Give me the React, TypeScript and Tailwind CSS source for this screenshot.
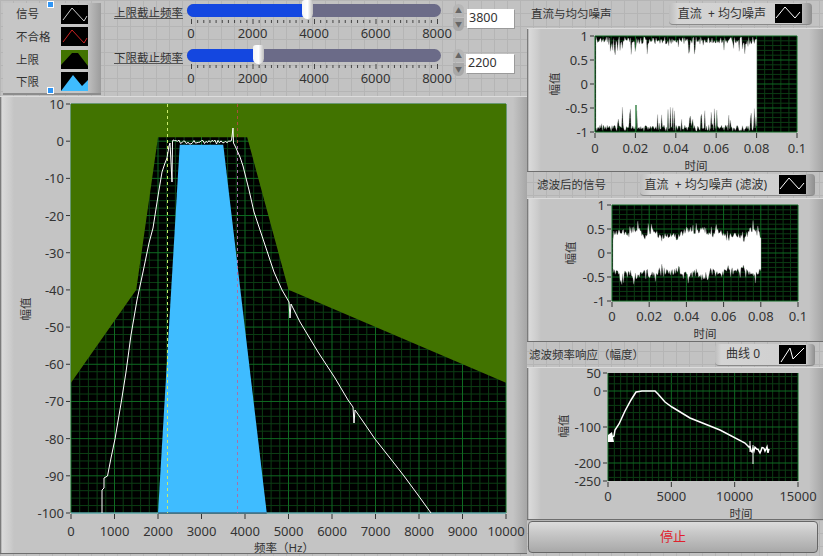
const font = "font-['Noto_Sans','Noto_Sans_CJK_SC',sans-serif]"

const rng = (seed: number) => {
  let s = seed
  return () => {
    s = (s * 16807) % 2147483647
    return s / 2147483647
  }
}

interface PlotBox {
  x0: number
  x1: number
  y0: number
  y1: number
}

const Grid = ({ box, xMajor, yMajor, xMinor = 5, yMinor = 5 }: { box: PlotBox; xMajor: number[]; yMajor: number[]; xMinor?: number; yMinor?: number }) => {
  const minors: string[] = []
  for (let i = 0; i < xMajor.length - 1; i++) {
    for (let j = 1; j < xMinor; j++) {
      const x = xMajor[i] + ((xMajor[i + 1] - xMajor[i]) * j) / xMinor
      minors.push(`M${x} ${box.y0}V${box.y1}`)
    }
  }
  for (let i = 0; i < yMajor.length - 1; i++) {
    for (let j = 1; j < yMinor; j++) {
      const y = yMajor[i] + ((yMajor[i + 1] - yMajor[i]) * j) / yMinor
      minors.push(`M${box.x0} ${y}H${box.x1}`)
    }
  }
  return (
    <g>
      <rect x={box.x0} y={box.y0} width={box.x1 - box.x0} height={box.y1 - box.y0} fill="#000" />
      <path d={minors.join("")} stroke="#0c3d14" strokeWidth="1" fill="none" />
      <path
        d={xMajor.map((x) => `M${x} ${box.y0}V${box.y1}`).join("") + yMajor.map((y) => `M${box.x0} ${y}H${box.x1}`).join("")}
        stroke="#0f6a22"
        strokeWidth="1"
        fill="none"
      />
    </g>
  )
}

const Axes = ({
  box,
  xTicks,
  yTicks,
  xLabelY,
  size = 13,
}: {
  box: PlotBox
  xTicks: [number, string][]
  yTicks: [number, string][]
  xLabelY: number
  size?: number
}) => (
  <g fill="#333" fontSize={size}>
    {xTicks.map(([x, t]) => (
      <g key={t}>
        <path d={`M${x} ${box.y1 + 1}v5`} stroke="#333" />
        <text x={x} y={xLabelY} textAnchor="middle">
          {t}
        </text>
      </g>
    ))}
    {yTicks.map(([y, t]) => (
      <g key={t}>
        <path d={`M${box.x0 - 5} ${y}h4`} stroke="#333" />
        <text x={box.x0 - 7} y={y + 5} textAnchor="end">
          {t}
        </text>
      </g>
    ))}
  </g>
)

const AxisText = ({ x, y, text, rotate = false }: { x: number; y: number; text: string; rotate?: boolean }) => (
  <text x={x} y={y} fontSize="11.5" fill="#333" textAnchor="middle" transform={rotate ? `rotate(-90 ${x} ${y})` : undefined}>
    {text}
  </text>
)

const Panel = ({ x, y, w, h, children }: { x: number; y: number; w: number; h: number; children: React.ReactNode }) => (
  <div
    className="shrink-0 border-y border-t-[#dcdcdc] border-b-[#6e6e6e] bg-[linear-gradient(90deg,#5c5c5c_0px,#dadada_2px,#cdcdcd_10px,#c4c4c4_14px,#c4c4c4_calc(100%-14px),#a6a6a6_100%)]"
    style={{ height: h }}
  >
    <svg width={w} height={h - 2} viewBox={`${x} ${y + 1} ${w} ${h - 2}`} className="block overflow-visible">
      {children}
    </svg>
  </div>
)

const LineIcon = ({ color = "#fff", d = "M2 14L12 3L23 15" }: { color?: string; d?: string }) => (
  <svg width="27" height="19" viewBox="0 0 27 19" className="block shrink-0">
    <rect width="27" height="19" fill="#000" />
    <path d={d} stroke={color} fill="none" strokeWidth="1" />
  </svg>
)

const LegendButton = ({ label, width, pad, gap, curve }: { label: string; width: number; pad: number; gap: number; curve?: boolean }) => (
  <div
    className="flex h-[22px] items-center justify-end rounded-sm border-b border-[#8a8a8a] bg-[linear-gradient(90deg,#bdbdbd,#d4d4d4_6%,#cfcfcf_90%,#8e8e8e)] text-[12px] text-[#333]"
    style={{ width, paddingRight: pad, gap }}
  >
    <span className="whitespace-pre">{label}</span>
    <LineIcon d={curve ? "M2 17L11 3L14 14L25 3" : "M1 14L10 3L20 14L25 8"} />
  </div>
)

const SectionHead = ({ label, button, h, left, right }: { label: string; button: React.ReactNode; h: number; left: number; right: number }) => (
  <div className="flex shrink-0 items-center justify-between" style={{ height: h, paddingLeft: left, paddingRight: right }}>
    <span className="whitespace-nowrap text-[11.5px] text-[#333]">{label}</span>
    {button}
  </div>
)

const hz = (f: number) => 71 + (f / 10000) * 435
const db = (v: number) => 141 - v * 3.72

const upperLimit = [
  [0, -65],
  [1500, -40],
  [2000, 1],
  [4050, 1],
  [5000, -40],
  [10000, -65],
]
  .map(([f, v]) => `${hz(f)},${db(v)}`)
  .join(" ")

const lowerLimit = [
  [2000, -100],
  [2500, -1],
  [3500, -1],
  [4500, -100],
]
  .map(([f, v]) => `${hz(f)},${db(v)}`)
  .join(" ")

const flatTop = () => {
  const r = rng(77)
  const pts: string[] = []
  for (let x = 173; x < 233; x += 1.5) {
    pts.push(`${x},${142 + (r() - 0.5) * 4}`)
  }
  return pts.join(" ")
}

const signal =
  "102,513 102,490 104,488 104,478 107.5,476 111,458 115,439 121.6,400 126,372 131,335 137,300 143,272 149,243 153,228 158,196 162,172 165,163 167,158 169,146 170,143 172,182 172.5,142 " +
  flatTop() +
  " 233,128 233.5,143 236,148 240,157 243,166 246,178 249,190 254,212 260,230 267,251 274,272 282,290 289,302 290,318 291,304 300,322 318,352 335,378 348,400 353,407 354,423 355,410 362,420 375,439 390,458 404,476 418,495 431,513"

const noise1 = () => {
  const r = rng(11)
  const up: string[] = []
  const down: string[] = []
  for (let x = 596; x <= 757; x += 0.8) {
    const a = r()
    const b = r()
    up.push(`${x},${37 + (a > 0.8 ? (a - 0.8) * 90 : a * 9)}`)
    down.unshift(`${x},${131 - (b > 0.75 ? (b - 0.75) * 96 : b * 8)}`)
  }
  return up.concat(down).join(" ")
}

const noise2 = () => {
  const r = rng(29)
  const up: string[] = []
  const down: string[] = []
  for (let x = 613; x <= 761; x += 0.8) {
    const env = 9 + 6 * Math.abs(Math.sin(x * 0.19)) + 5 * Math.abs(Math.sin(x * 0.047))
    const a = r()
    const b = r()
    up.push(`${x},${253 - env - a * 8 - (a > 0.9 ? (a - 0.9) * 60 : 0)}`)
    down.unshift(`${x},${253 + env + b * 8 + (b > 0.9 ? (b - 0.9) * 60 : 0)}`)
  }
  return up.concat(down).join(" ")
}

const ticks = (x0: number, x1: number, labels: string[]): [number, string][] =>
  labels.map((t, i) => [x0 + ((x1 - x0) * i) / (labels.length - 1), t])

const evenly = (a: number, b: number, n: number) => Array.from({ length: n + 1 }, (_, i) => a + ((b - a) * i) / n)

const MainChart = () => {
  const box = { x0: 71, x1: 506, y0: 104, y1: 513 }
  return (
    <Panel x={0} y={96} w={527} h={458}>
      <Grid box={box} xMajor={evenly(71, 506, 10)} yMajor={evenly(104, 513, 11)} />
      <polygon points={`71,104 ${upperLimit} 506,104`} fill="#417300" />
      <polygon points={lowerLimit} fill="#3fbcff" />
      <path d="M71 513H506" stroke="#7fc4e8" />
      <path d={`M${hz(2000)} 513H${hz(4500)}`} stroke="#1d3f5a" />
      <path d="M167.5 104V513" stroke="#c9ea6a" strokeDasharray="3 3" />
      <path d="M237.5 104V146" stroke="#a8503c" strokeDasharray="3 3" />
      <path d="M237.5 146V513" stroke="#a870a8" strokeDasharray="3 3" />
      <polyline points={signal} fill="none" stroke="#fff" strokeWidth="1" />
      <Axes
        box={box}
        xTicks={ticks(71, 506, ["0", "1000", "2000", "3000", "4000", "5000", "6000", "7000", "8000", "9000", "10000"])}
        yTicks={evenly(104, 513, 11).map((y, i) => [y, String(10 - i * 10)] as [number, string])}
        xLabelY={536}
      />
      <AxisText x={284} y={552} text="频率（Hz）" />
      <AxisText x={30} y={309} text="幅值" rotate />
    </Panel>
  )
}

const NoiseChart = () => {
  const box = { x0: 595, x1: 797, y0: 36, y1: 132 }
  return (
    <Panel x={527} y={28} w={296} h={144}>
      <Grid box={box} xMajor={evenly(595, 797, 5)} yMajor={evenly(36, 132, 4)} />
      <polygon points={noise1()} fill="#fff" stroke="#9a9a9a" strokeWidth="0.3" />
      <path d="M636 105V131" stroke="#0f6a22" strokeWidth="1.2" />
      <Axes
        box={box}
        xTicks={ticks(595, 797, ["0", "0.02", "0.04", "0.06", "0.08", "0.1"])}
        yTicks={ticks(36, 132, ["1", "0.5", "0", "-0.5", "-1"])}
        xLabelY={153}
      />
      <AxisText x={696} y={170} text="时间" />
      <AxisText x={559} y={84} text="幅值" rotate />
    </Panel>
  )
}

const FilteredChart = () => {
  const box = { x0: 612, x1: 798, y0: 205, y1: 301 }
  return (
    <Panel x={527} y={198} w={296} h={144}>
      <Grid box={box} xMajor={evenly(612, 798, 5)} yMajor={evenly(205, 301, 4)} />
      <polygon points={noise2()} fill="#fff" stroke="#9a9a9a" strokeWidth="0.3" />
      <Axes
        box={box}
        xTicks={ticks(612, 798, ["0", "0.02", "0.04", "0.06", "0.08", "0.1"])}
        yTicks={ticks(205, 301, ["1", "0.5", "0", "-0.5", "-1"])}
        xLabelY={321}
      />
      <AxisText x={705} y={338} text="时间" />
      <AxisText x={575} y={253} text="幅值" rotate />
    </Panel>
  )
}

const responseTail = () => {
  const r = rng(5)
  const pts: string[] = []
  for (let x = 750; x < 770; x += 1) pts.push(`${x},${450 + (r() - 0.5) * 7}`)
  return pts.join(" ")
}

const ResponseChart = () => {
  const box = { x0: 608, x1: 798, y0: 373, y1: 481 }
  return (
    <Panel x={527} y={367} w={296} h={153}>
      <Grid box={box} xMajor={evenly(608, 798, 3)} yMajor={[391, 427, 463]} xMinor={10} />
      <path d="M608 376.6H798M608 383.8H798M608 470.2H798M608 477.4H798" stroke="#0c3d14" />
      <polygon points="608,435 612,432 614,442 608,442" fill="#fff" />
      <polyline
        points={`609,440 612,437 614,436 615,430 619,424 625,411 631,400 636,392 642,391 655,391 658,394 665,402 672,407 690,418 720,430 745,443 749,447 ${responseTail()}`}
        fill="none"
        stroke="#fff"
        strokeWidth="1.5"
      />
      <path d="M753 445V464M750 441V452" stroke="#fff" />
      <Axes
        box={box}
        xTicks={ticks(608, 798, ["0", "5000", "10000", "15000"])}
        yTicks={[
          [373, "50"],
          [391, "0"],
          [427, "-100"],
          [463, "-200"],
          [481, "-250"],
        ]}
        xLabelY={501}
      />
      <AxisText x={741} y={518} text="时间" />
      <AxisText x={568} y={426} text="幅值" rotate />
    </Panel>
  )
}

const Slider = ({ label, value, boxLeft }: { label: string; value: number; boxLeft: number }) => {
  const pos = 4 + (value / 8000) * 246
  const tickMarks = Array.from({ length: 41 }, (_, i) => i)
  return (
    <div className="flex items-start">
      <span className="mt-[2px] w-[73px] whitespace-nowrap text-[11.5px] leading-[14px] text-[#333] underline decoration-[#555]">{label}</span>
      <div className="w-[254px]">
        <div className="relative h-[13px] rounded-full bg-[#6b6b88]">
          <div className="h-full rounded-l-full bg-[#1447e0]" style={{ width: pos }} />
          <div
            className="absolute top-[-4px] h-[19px] w-[11px] rounded-t-[3px] rounded-b-[6px] bg-[linear-gradient(90deg,#f4f4f4,#fff_50%,#bdbdbd)]"
            style={{ left: pos - 6 }}
          />
        </div>
        <svg width="254" height="8" className="block">
          {tickMarks.map((i) => (
            <path key={i} d={`M${4.5 + i * 6.15} ${i % 10 === 0 ? 2 : 3}v${i % 10 === 0 ? 5 : 3}`} stroke="#444" />
          ))}
        </svg>
        <div className="ml-[4px] flex w-[246px] justify-between text-[13px] leading-[16px] text-[#333]">
          {["0", "2000", "4000", "6000", "8000"].map((t) => (
            <span key={t} className="flex w-0 justify-center">
              {t}
            </span>
          ))}
        </div>
      </div>
      <div className="ml-[12px] flex w-[11px] flex-col gap-[1px]">
        <div className="flex h-[13px] items-center justify-center rounded-t-full bg-[#b6b6b6] text-[7px] leading-none text-[#666]">▲</div>
        <div className="flex h-[13px] items-center justify-center rounded-b-full bg-[#a8a8a8] text-[7px] leading-none text-[#666]">▼</div>
      </div>
      <div
        className="mt-[5px] flex h-[19px] items-center bg-white pl-[2px] text-[12.5px] text-[#333] shadow-[1px_1px_0_#9a9a9a]"
        style={{ marginLeft: boxLeft, width: 50 - boxLeft }}
      >
        {value}
      </div>
    </div>
  )
}

const PlotLegend = () => {
  const rows: [string, React.ReactNode][] = [
    ["信号", <LineIcon key="a" color="#cfcfcf" d="M2 15L11 3L23 16L26 11" />],
    ["不合格", <LineIcon key="b" color="#c22" d="M2 15L11 3L23 16L26 11" />],
    [
      "上限",
      <svg key="c" width="27" height="19" className="block">
        <rect width="27" height="19" fill="#000" />
        <path d="M0 0H27V16L17 3H11L0 15Z" fill="#417300" />
      </svg>,
    ],
    [
      "下限",
      <svg key="d" width="27" height="19" className="block">
        <rect width="27" height="19" fill="#000" />
        <path d="M0 19L12 3L21 14L27 8V19Z" fill="#3fbcff" />
      </svg>,
    ],
  ]
  return (
    <div className="relative ml-[3px] mt-[3px] flex h-[92px] w-[98px] flex-col justify-between border-b-2 border-[#8c8c8c] bg-[linear-gradient(90deg,#c6c6c6_84%,#9c9c9c)] py-[1px] pl-[13px] pr-[13px]">
      {rows.map(([name, icon]) => (
        <div key={name} className="flex h-[20px] items-center justify-between text-[11.5px] text-[#333]">
          <span>{name}</span>
          {icon}
        </div>
      ))}
      <div className="absolute left-[44px] top-[-2px] h-[7px] w-[7px] border border-white bg-[#2f95f5]" />
      <div className="absolute bottom-[-1px] left-[44px] h-[7px] w-[7px] border border-white bg-[#2f95f5]" />
    </div>
  )
}

export default function App() {
  return (
    <div
      className={`${font} flex h-[556px] w-[823px] overflow-hidden bg-[#c2c2c2] bg-[linear-gradient(#b5b5b5_1px,transparent_1px),linear-gradient(90deg,#b5b5b5_1px,transparent_1px)] bg-size-[13px_13px]`}
    >
      <div className="flex w-[527px] shrink-0 flex-col">
        <div className="flex h-[96px] shrink-0 items-start">
          <PlotLegend />
          <div className="ml-[13px] flex flex-col gap-[8px] pt-[4px]">
            <Slider label="上限截止频率" value={3800} boxLeft={3} />
            <Slider label="下限截止频率" value={2200} boxLeft={2} />
          </div>
        </div>
        <MainChart />
      </div>
      <div className="flex w-[296px] shrink-0 flex-col">
        <SectionHead label="直流与均匀噪声" h={28} left={4} right={11} button={<LegendButton label="直流  + 均匀噪声" width={143} pad={10} gap={9} />} />
        <NoiseChart />
        <SectionHead label="滤波后的信号" h={26} left={10} right={8} button={<LegendButton label="直流  + 均匀噪声 (滤波)" width={175} pad={9} gap={12} />} />
        <FilteredChart />
        <SectionHead label="滤波频率响应（幅度）" h={25} left={2} right={8} button={<LegendButton label="曲线 0" width={100} pad={9} gap={19} curve />} />
        <ResponseChart />
        <button className="mx-[1px] mt-[1px] h-[32px] w-[290px] shrink-0 rounded-sm border border-[#666] bg-[linear-gradient(#dcdcdc,#c6c6c6_40%,#a8a8a8)] text-[13px] text-[#e0202c]">
          停止
        </button>
      </div>
    </div>
  )
}
